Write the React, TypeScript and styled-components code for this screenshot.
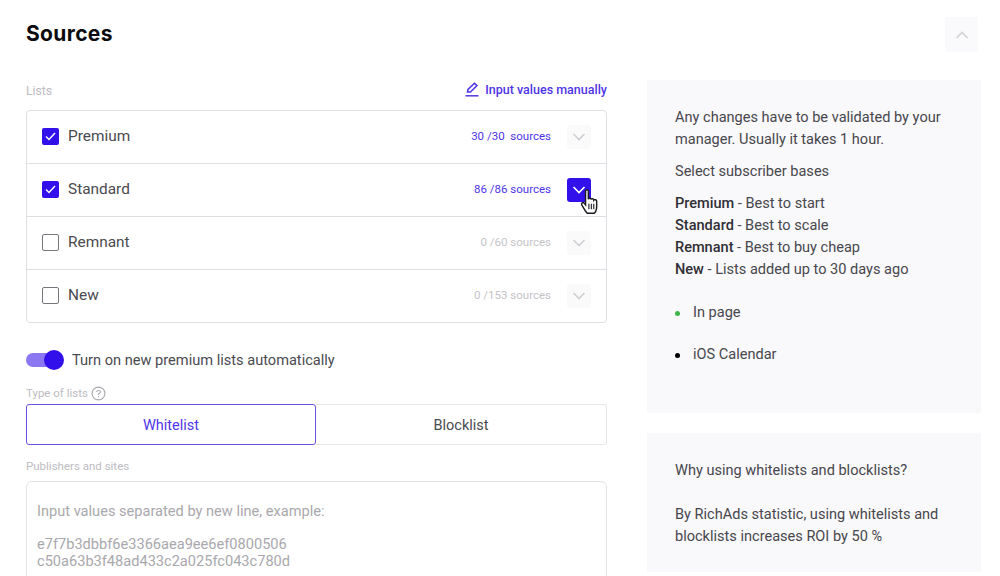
import { createGlobalStyle } from "styled-components";
import styled from "styled-components";

const Global = createGlobalStyle`
    html, body {
        margin: 0;
        height: 576px;
        overflow: hidden;
        background: #fff;
        font-family: Roboto, "Liberation Sans", sans-serif;
        color: #3f3f46;
    }
    * { box-sizing: border-box; }
`;

const Page = styled.div`
    width: 1000px;
    height: 576px;
    overflow: hidden;
    padding: 16px 22px 0 26px;
`;

const Header = styled.div`
    display: flex;
    justify-content: space-between;
    align-items: center;
    height: 34px;
    margin-bottom: 30px;
`;

const Title = styled.h1`
    margin: 0;
    padding-top: 2px;
    font-family: Inter, "Open Sans", sans-serif;
    font-size: 21px;
    line-height: 34px;
    font-weight: 700;
    letter-spacing: 0.35px;
    color: #0c0c10;
`;

const CollapseButton = styled.div`
    width: 33px;
    height: 35px;
    margin-top: 3px;
    background: #faf9fb;
    display: flex;
    align-items: center;
    justify-content: center;
`;

const Columns = styled.div`
    display: flex;
    gap: 40px;
`;

const Left = styled.div`
    width: 581px;
    flex: none;
`;

const Right = styled.div`
    width: 334px;
    flex: none;
    display: flex;
    flex-direction: column;
    gap: 20px;
`;

const ListsHead = styled.div`
    display: flex;
    justify-content: space-between;
    align-items: center;
    height: 20px;
    margin-bottom: 10px;
`;

const FieldLabel = styled.span`
    display: flex;
    align-items: center;
    gap: 3px;
    font-size: 11.5px;
    color: #bdbcc2;
`;

const ListsLabel = styled(FieldLabel)`
    margin-top: 2px;
    font-size: 12.2px;
`;

const ManualLink = styled.a`
    display: flex;
    align-items: center;
    gap: 6px;
    margin-bottom: 2px;
    font-size: 12.5px;
    font-weight: 500;
    color: #4f35e8;
`;

const ListBox = styled.div`
    border: 1px solid #dfdee2;
    border-radius: 4px;
    height: 213px;
    display: flex;
    flex-direction: column;
`;

const Row = styled.div`
    flex: 1;
    display: flex;
    align-items: center;
    padding: 0 15px;
    position: relative;
    & + & {
        border-top: 1px solid #dfdee2;
    }
`;

const Check = styled.span<{ $on?: boolean }>`
    width: 17px;
    height: 17px;
    margin-bottom: 2px;
    border-radius: 2px;
    flex: none;
    display: flex;
    align-items: center;
    justify-content: center;
    background: ${(p) => (p.$on ? "#3110ec" : "#fff")};
    border: ${(p) => (p.$on ? "none" : "1.5px solid #77767c")};
`;

const RowName = styled.span`
    margin: 0 0 2px 9px;
    font-size: 15.4px;
    color: #4a4a50;
`;

const Count = styled.span<{ $on?: boolean }>`
    margin: 0 1px 2px auto;
    font-size: 11.5px;
    white-space: pre;
    color: ${(p) => (p.$on ? "#4f35e8" : "#c4c3c7")};
`;

const Expand = styled.span<{ $active?: boolean }>`
    width: 24px;
    height: 24px;
    margin-left: 15px;
    border-radius: 3px;
    flex: none;
    display: flex;
    align-items: center;
    justify-content: center;
    background: ${(p) => (p.$active ? "#3110ec" : "#fbfafb")};
`;

const Pointer = styled.svg`
    position: absolute;
    right: 6px;
    top: 24px;
`;

const ToggleRow = styled.div`
    display: flex;
    align-items: center;
    gap: 8px;
    margin-top: 25px;
    height: 24px;
    font-size: 14.6px;
    color: #4a4a50;
`;

const Toggle = styled.span`
    width: 38px;
    height: 20px;
    position: relative;
    flex: none;
    &::before {
        content: "";
        position: absolute;
        left: 0;
        right: 2px;
        top: 3px;
        bottom: 3px;
        border-radius: 7px;
        background: #8b77f2;
    }
    &::after {
        content: "";
        position: absolute;
        right: 0;
        top: 0;
        width: 20px;
        height: 20px;
        border-radius: 50%;
        background: #3110ec;
    }
`;

const TypeLabel = styled(FieldLabel)`
    margin-top: 14px;
    height: 14px;
`;

const Tabs = styled.div`
    display: flex;
    margin-top: 4px;
    height: 41px;
`;

const Tab = styled.div<{ $active?: boolean }>`
    width: ${(p) => (p.$active ? "290px" : "291px")};
    display: flex;
    align-items: center;
    justify-content: center;
    padding-top: 1px;
    font-size: 14.5px;
    border-radius: ${(p) => (p.$active ? "3px" : "0 3px 3px 0")};
    color: ${(p) => (p.$active ? "#4f35e8" : "#4a4a50")};
    border: 1px solid ${(p) => (p.$active ? "#6a52e0" : "#e6e5e9")};
    border-left-width: ${(p) => (p.$active ? "1px" : "0")};
`;

const SitesLabel = styled(FieldLabel)`
    margin-top: 14px;
    height: 14px;
`;

const TextBox = styled.div`
    margin-top: 8px;
    height: 130px;
    border: 1px solid #e3e2e6;
    border-radius: 6px;
    padding: 21px 10px;
    font-size: 14.6px;
    line-height: 17px;
    color: #a9a8ad;
`;

const Example = styled.div`
    margin-top: 16px;
`;

const Panel = styled.div<{ $h: number }>`
    height: ${(p) => p.$h}px;
    background: #f9f8fa;
    padding: 27px 28px;
    font-size: 14.55px;
    line-height: 22px;
    color: #47474d;
`;

const Para = styled.p`
    margin: 0 0 10px;
`;

const Bases = styled.div`
    margin-top: 10px;
    b {
        font-weight: 500;
        color: #2f2f35;
    }
`;

const Bullets = styled.ul`
    list-style: none;
    margin: 21px 0 0;
    padding: 0;
    display: flex;
    flex-direction: column;
    gap: 20px;
`;

const Bullet = styled.li<{ $color: string }>`
    display: flex;
    align-items: center;
    gap: 13px;
    &::before {
        content: "";
        width: 5px;
        height: 5px;
        border-radius: 50%;
        background: ${(p) => p.$color};
    }
`;

const Chevron = ({ color, up }: { color: string; up?: boolean }) => (
    <svg width="14" height="8" viewBox="0 0 14 8" fill="none">
        <path
            d={up ? "M1.5 7L7 1.5L12.5 7" : "M1.5 1L7 6.5L12.5 1"}
            stroke={color}
            strokeWidth="1.6"
        />
    </svg>
);

const Tick = () => (
    <svg width="11" height="9" viewBox="0 0 11 9" fill="none">
        <path d="M1 4.5L4 7.5L10 1" stroke="#fff" strokeWidth="1.4" />
    </svg>
);

const rows = [
    { name: "Premium", count: "30 /30  sources", on: true },
    { name: "Standard", count: "86 /86 sources", on: true, active: true },
    { name: "Remnant", count: "0 /60 sources", on: false },
    { name: "New", count: "0 /153 sources", on: false },
];

export default function App() {
    return (
        <>
            <Global />
            <Page>
                <Header>
                    <Title>Sources</Title>
                    <CollapseButton>
                        <Chevron color="#d3d2d6" up />
                    </CollapseButton>
                </Header>
                <Columns>
                    <Left>
                        <ListsHead>
                            <ListsLabel>Lists</ListsLabel>
                            <ManualLink>
                                <svg width="14" height="15" viewBox="0 0 14 15" fill="none" stroke="#4f35e8" strokeWidth="1.5">
                                    <path d="M2.5 10L3 7.5L9.5 1.2L12 3.6L5.5 10Z" />
                                    <path d="M0.5 13.8H13.5" />
                                </svg>
                                Input values manually
                            </ManualLink>
                        </ListsHead>
                        <ListBox>
                            {rows.map((r) => (
                                <Row key={r.name}>
                                    <Check $on={r.on}>{r.on && <Tick />}</Check>
                                    <RowName>{r.name}</RowName>
                                    <Count $on={r.on}>{r.count}</Count>
                                    <Expand $active={r.active}>
                                        <Chevron color={r.active ? "#fff" : "#cfced3"} />
                                    </Expand>
                                    {r.active && (
                                        <Pointer width="20" height="27" viewBox="0 0 18 24">
                                            <path
                                                d="M5 2.5C5 1 7.5 1 7.5 2.5V10C8 8.8 10 8.8 10 10.2C10.5 9.2 12.4 9.4 12.4 10.8C13 10 15 10.3 15 11.8V17C15 20 13.5 22.5 12.5 22.5H6.5C5 21 3 17.5 1.6 15C0.8 13.4 2.6 12.2 3.8 13.5L5 15Z"
                                                fill="#fff"
                                                stroke="#1b1b1f"
                                                strokeWidth="1.3"
                                            />
                                            <path d="M8 14V19M10.2 14V19M12.4 14V19" stroke="#1b1b1f" strokeWidth="1" />
                                        </Pointer>
                                    )}
                                </Row>
                            ))}
                        </ListBox>
                        <ToggleRow>
                            <Toggle />
                            Turn on new premium lists automatically
                        </ToggleRow>
                        <TypeLabel>
                            Type of lists
                            <svg width="15" height="15" viewBox="0 0 15 15" fill="none" stroke="#a9a8ad" strokeWidth="1.1">
                                <circle cx="7.5" cy="7.5" r="6.4" />
                                <path d="M5.6 6C5.7 3.9 9.4 3.9 9.4 6C9.4 7.3 7.5 7.3 7.5 9" />
                                <path d="M7.5 10.2V11.3" />
                            </svg>
                        </TypeLabel>
                        <Tabs>
                            <Tab $active>Whitelist</Tab>
                            <Tab>Blocklist</Tab>
                        </Tabs>
                        <SitesLabel>Publishers and sites</SitesLabel>
                        <TextBox>
                            Input values separated by new line, example:
                            <Example>
                                e7f7b3dbbf6e3366aea9ee6ef0800506
                                <br />
                                c50a63b3f48ad433c2a025fc043c780d
                            </Example>
                        </TextBox>
                    </Left>
                    <Right>
                        <Panel $h={333}>
                            <Para>Any changes have to be validated by your manager. Usually it takes 1 hour.</Para>
                            <Para>Select subscriber bases</Para>
                            <Bases>
                                <b>Premium</b> - Best to start
                                <br />
                                <b>Standard</b> - Best to scale
                                <br />
                                <b>Remnant</b> - Best to buy cheap
                                <br />
                                <b>New</b> - Lists added up to 30 days ago
                            </Bases>
                            <Bullets>
                                <Bullet $color="#3fb54a">In page</Bullet>
                                <Bullet $color="#000">iOS Calendar</Bullet>
                            </Bullets>
                        </Panel>
                        <Panel $h={139}>
                            Why using whitelists and blocklists?
                            <br />
                            <br />
                            By RichAds statistic, using whitelists and blocklists increases ROI by 50 %
                        </Panel>
                    </Right>
                </Columns>
            </Page>
        </>
    );
}
